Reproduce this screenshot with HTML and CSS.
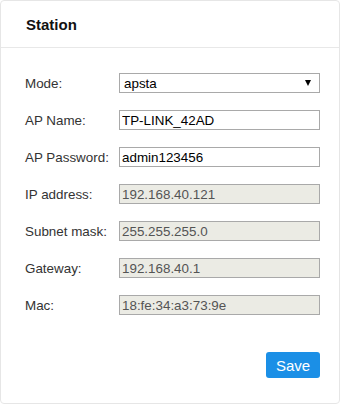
FILE: index.html
```html
<!DOCTYPE html>
<html lang="en">
<head>
  <meta charset="UTF-8">
  <meta name="viewport" content="width=device-width, initial-scale=1.0">
  <title>Station</title>
  <link rel="stylesheet" href="styles.css">
</head>
<body>
  <div class="card">
    <!-- Titolo della sezione -->
    <div class="card-header">Station</div>

    <!-- Form di configurazione -->
    <form class="card-body">
      <div class="row">
        <label for="mode">Mode:</label>
        <div class="select-wrap">
          <select id="mode" class="field">
            <option>apsta</option>
            <option>ap</option>
            <option>sta</option>
          </select>
        </div>
      </div>
      <div class="row">
        <label for="apName">AP Name:</label>
        <input id="apName" class="field" type="text" value="TP-LINK_42AD">
      </div>
      <div class="row">
        <label for="apPass">AP Password:</label>
        <input id="apPass" class="field" type="text" value="admin123456">
      </div>
      <div class="row">
        <label for="ip">IP address:</label>
        <input id="ip" class="field" type="text" value="192.168.40.121" disabled>
      </div>
      <div class="row">
        <label for="mask">Subnet mask:</label>
        <input id="mask" class="field" type="text" value="255.255.255.0" disabled>
      </div>
      <div class="row">
        <label for="gw">Gateway:</label>
        <input id="gw" class="field" type="text" value="192.168.40.1" disabled>
      </div>
      <div class="row">
        <label for="mac">Mac:</label>
        <input id="mac" class="field" type="text" value="18:fe:34:a3:73:9e" disabled>
      </div>
      <div class="actions">
        <button type="button" class="btn-save">Save</button>
      </div>
    </form>
  </div>
</body>
</html>
```

FILE: styles.css
```css
body {
  margin: 0;
  background-color: #ffffff;
  font-family: "Liberation Sans", Arial, sans-serif;
}
/* Contenitore principale */
.card {
  width: 340px;
  height: 404px;
  box-sizing: border-box;
  border: 1px solid #e6e6e6;
  border-radius: 4px;
  background-color: #ffffff;
}
.card-header {
  height: 47px;
  box-sizing: border-box;
  padding: 15px 0 0 25px;
  font-size: 15px;
  font-weight: bold;
  color: #111111;
  border-bottom: 1px solid #e8e8e8;
}
.card-body {
  margin: 0;
  padding: 25px 19px 0 24px;
}
/* Riga etichetta + campo */
.row {
  display: flex;
  align-items: center;
  margin-bottom: 17px;
}
.row label {
  width: 94px;
  font-size: 13.4px;
  color: #333333;
}
.field {
  width: 201px;
  height: 20px;
  box-sizing: border-box;
  margin: 0;
  padding: 0 0 0 2px;
  border: 1px solid #a9a9a9;
  border-radius: 0;
  font-family: "Liberation Sans", Arial, sans-serif;
  font-size: 13.4px;
  color: #000000;
  background-color: #ffffff;
}
.field:disabled {
  background-color: #ebebe4;
  color: #545454;
}
select.field {
  -webkit-appearance: none;
  appearance: none;
  padding-left: 4px;
}
/* Freccia della tendina */
.select-wrap {
  position: relative;
}
.select-wrap::after {
  content: "";
  position: absolute;
  right: 9px;
  top: 7px;
  border-left: 3.5px solid transparent;
  border-right: 3.5px solid transparent;
  border-top: 6px solid #000000;
  pointer-events: none;
}
.actions {
  display: flex;
  justify-content: flex-end;
  margin-top: 37px;
}
.btn-save {
  width: 54px;
  height: 26px;
  border: none;
  border-radius: 3px;
  background-color: #1b8fe6;
  color: #ffffff;
  font-family: "Liberation Sans", Arial, sans-serif;
  font-size: 15px;
  cursor: pointer;
}
```
